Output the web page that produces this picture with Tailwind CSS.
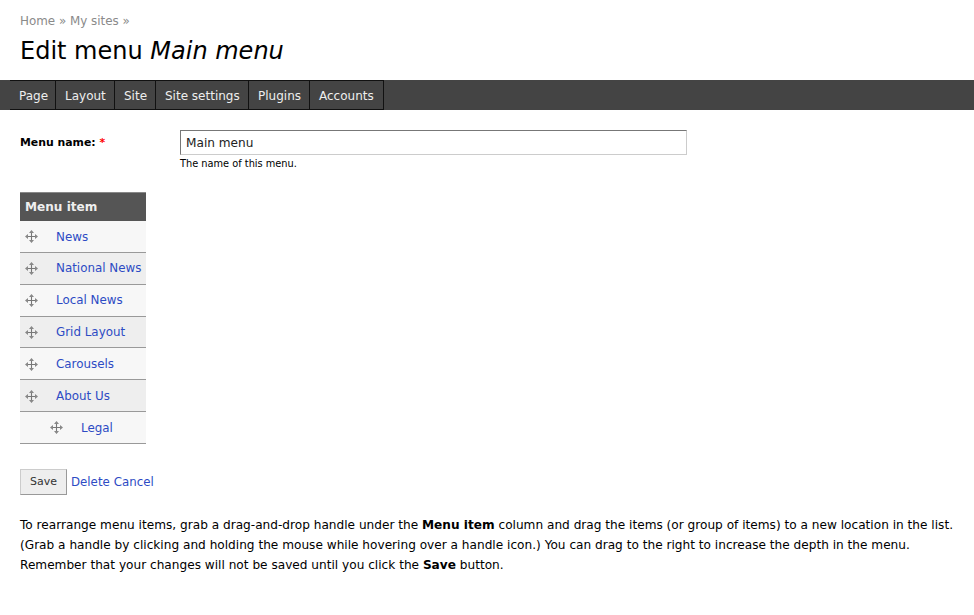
<!DOCTYPE html>
<html lang="en">
<head>
<meta charset="UTF-8">
<title>Edit menu Main menu</title>
<script src="https://cdn.jsdelivr.net/npm/@tailwindcss/browser@4"></script>
</head>
<body class="bg-white font-['DejaVu_Sans',sans-serif] text-[12.13px] leading-[20px] text-black">
<svg class="hidden">
  <symbol id="handle" viewBox="0 0 13 13">
    <path d="M6.500 1v11M1 6.500h11" stroke="#777" stroke-width="1.100" fill="none"/>
    <path d="M6.500 0l2.500 3h-5zM6.500 13l2.500-3h-5zM0 6.500l3-2.500v5zM13 6.500l-3-2.500v5z" fill="#888"/>
  </symbol>
</svg>
<div class="px-5 pt-[11px] text-[11.9px] text-[#8a8a8a]">
  <a href="#">Home</a> » <a href="#">My sites</a> »
</div>
<h1 class="px-5 mt-[4px] text-[24px] leading-[32px] font-normal">Edit menu <em>Main menu</em></h1>

<nav class="mt-[13px] h-[30px] bg-[#444] pl-[10px] flex text-[12px] text-[#eee]">
  <a href="#" class="w-[46px] h-full flex items-center pl-[9px] pt-[1px] border-y border-r border-[#111]">Page</a>
  <a href="#" class="w-[59px] h-full flex items-center pl-[9px] pt-[1px] border-y border-r border-[#111]">Layout</a>
  <a href="#" class="w-[41px] h-full flex items-center pl-[9px] pt-[1px] border-y border-r border-[#111]">Site</a>
  <a href="#" class="w-[93px] h-full flex items-center pl-[9px] pt-[1px] border-y border-r border-[#111]">Site settings</a>
  <a href="#" class="w-[61px] h-full flex items-center pl-[9px] pt-[1px] border-y border-r border-[#111]">Plugins</a>
  <a href="#" class="w-[74px] h-full flex items-center pl-[9px] pt-[1px] border-y border-r border-[#111]">Accounts</a>
</nav>

<div class="px-5 mt-5 flex">
  <label class="w-[160px] pt-[3px] font-bold text-[10.9px]">Menu name: <span class="text-[#f00]">*</span></label>
  <div>
    <input type="text" value="Main menu" class="block w-[507px] h-[25px] px-[5px] border border-[#777] border-b-[#ccc] border-r-[#ccc] text-[#222] outline-none">
    <div class="text-[9.8px] leading-[16px] mt-[1px]">The name of this menu.</div>
  </div>
</div>

<table class="ml-5 mt-5 w-[126px] border-collapse text-[11.9px]">
  <thead>
    <tr><th class="h-[28px] bg-[#555] border-t border-[#888] text-left pl-[5px] text-[12.1px] text-[#eee] font-bold">Menu item</th></tr>
  </thead>
  <tbody class="text-[#2d4bc4]">
    <tr class="bg-[#f7f7f7]"><td class="h-[32px] border-b border-[#999]"><div class="flex items-center pl-[5px]"><svg class="w-[13px] h-[13px] mr-[18px]"><use href="#handle"/></svg><a href="#" class="mt-[2px]">News</a></div></td></tr>
    <tr class="bg-[#eee]"><td class="h-[32px] border-b border-[#999]"><div class="flex items-center pl-[5px]"><svg class="w-[13px] h-[13px] mr-[18px]"><use href="#handle"/></svg><a href="#" class="mb-[2px] whitespace-nowrap">National News</a></div></td></tr>
    <tr class="bg-[#f7f7f7]"><td class="h-[32px] border-b border-[#999]"><div class="flex items-center pl-[5px]"><svg class="w-[13px] h-[13px] mr-[18px]"><use href="#handle"/></svg><a href="#" class="mb-[2px]">Local News</a></div></td></tr>
    <tr class="bg-[#eee]"><td class="h-[31px] border-b border-[#999]"><div class="flex items-center pl-[5px]"><svg class="w-[13px] h-[13px] mr-[18px]"><use href="#handle"/></svg><a href="#">Grid Layout</a></div></td></tr>
    <tr class="bg-[#f7f7f7]"><td class="h-[32px] border-b border-[#999]"><div class="flex items-center pl-[5px]"><svg class="w-[13px] h-[13px] mr-[18px] mt-[2px]"><use href="#handle"/></svg><a href="#">Carousels</a></div></td></tr>
    <tr class="bg-[#eee]"><td class="h-[32px] border-b border-[#999]"><div class="flex items-center pl-[5px]"><svg class="w-[13px] h-[13px] mr-[18px] mt-[2px]"><use href="#handle"/></svg><a href="#">About Us</a></div></td></tr>
    <tr class="bg-[#f7f7f7]"><td class="h-[32px] border-b border-[#999]"><div class="flex items-center pl-[30px]"><svg class="w-[13px] h-[13px] mr-[18px]"><use href="#handle"/></svg><a href="#">Legal</a></div></td></tr>
  </tbody>
</table>

<div class="ml-5 mt-[25px] flex items-center text-[11.8px] text-[#2d4bc4]">
  <button class="w-[47px] h-[26px] bg-[#eee] border border-[#999] border-t-[#ccc] border-l-[#ccc] text-[11px] text-[#333]">Save</button>
  <a href="#" class="ml-[4px]">Delete</a>
  <a href="#" class="ml-[4px]">Cancel</a>
</div>

<p class="mx-5 mt-5 leading-[20px]">To rearrange menu items, grab a drag-and-drop handle under the <strong>Menu item</strong> column and drag the items (or group of items) to a new location in the list. (Grab a handle by clicking and holding the mouse while hovering over a handle icon.) You can drag to the right to increase the depth in the menu. Remember that your changes will not be saved until you click the <strong>Save</strong> button.</p>
</body>
</html>
